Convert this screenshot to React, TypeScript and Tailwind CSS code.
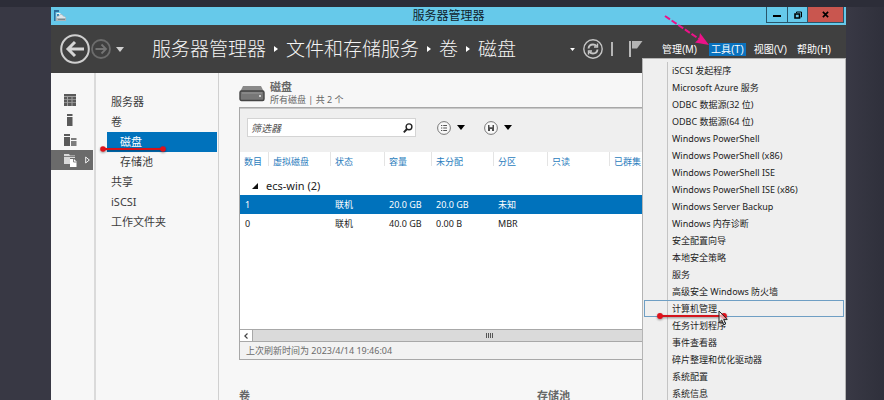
import type { ReactNode } from "react";

const crumbs = ["服务器管理器", "文件和存储服务", "卷", "磁盘"];

const toolItems = [
  "iSCSI 发起程序",
  "Microsoft Azure 服务",
  "ODBC 数据源(32 位)",
  "ODBC 数据源(64 位)",
  "Windows PowerShell",
  "Windows PowerShell (x86)",
  "Windows PowerShell ISE",
  "Windows PowerShell ISE (x86)",
  "Windows Server Backup",
  "Windows 内存诊断",
  "安全配置向导",
  "本地安全策略",
  "服务",
  "高级安全 Windows 防火墙",
  "计算机管理",
  "任务计划程序",
  "事件查看器",
  "碎片整理和优化驱动器",
  "系统配置",
  "系统信息",
];

const navItems = [
  { label: "服务器" },
  { label: "卷" },
  { label: "磁盘", child: true, active: true },
  { label: "存储池", child: true },
  { label: "共享" },
  { label: "iSCSI" },
  { label: "工作文件夹" },
];

const columns = ["数目", "虚拟磁盘", "状态", "容量", "未分配", "分区", "只读", "已群集"];

const disks = [
  { cells: ["1", "", "联机", "20.0 GB", "20.0 GB", "未知", "", ""], selected: true },
  { cells: ["0", "", "联机", "40.0 GB", "0.00 B", "MBR", "", ""], selected: false },
];

function Caret({ className }: { className: string }) {
  return (
    <svg viewBox="0 0 8 5" className={className} aria-hidden="true">
      <path d="M0 0h8L4 5z" fill="currentColor" />
    </svg>
  );
}

function TitleBar() {
  return (
    <div className="relative flex h-[18px] shrink-0 items-center justify-center bg-[#66c9ea]">
      <svg viewBox="0 0 12 12" className="absolute left-[3px] top-[3px] size-3" aria-hidden="true">
        <path d="M0 0h5v2H1.500v9H0z" fill="#2f6f9e" />
        <path d="M2.500 3h4v7h-4z" fill="#e8f1f5" />
        <path d="M3 4h2v2H3z" fill="#3f88b8" />
        <path d="M2 8c0-2 2-2 2.500-2C5 3.500 9 3.500 9.500 6 12 6.200 12 8 12 8v3H2z" fill="#a9b5ba" />
        <path d="M2.500 8c.3-1.500 2-1.500 2.500-1.500C5.500 4.300 8.500 4.300 9 6.500c1.500 0 2.500.5 2.500 1.500z" fill="#dde6ea" />
        <path d="M4 9h7v1H4z" fill="#7b888e" />
      </svg>
      <h1 className="text-[12px] leading-4 text-[#10242c]">服务器管理器</h1>
      <div className="absolute right-[2px] top-0 flex h-4 border border-t-0 border-[#28566b]">
        <button type="button" aria-label="最小化" className="flex w-[21px] items-center justify-center border-r border-[#28566b]">
          <span className="mt-0.5 h-0.5 w-2 bg-black" />
        </button>
        <button type="button" aria-label="还原" className="flex w-[20px] items-center justify-center border-r border-[#28566b]">
          <svg viewBox="0 0 8 8" className="size-2" aria-hidden="true">
            <path d="M2.500 2V1h5v5h-1" fill="none" stroke="#000" strokeWidth="1" />
            <path d="M1 3h4.500v4H1z" fill="none" stroke="#000" strokeWidth="1.600" />
          </svg>
        </button>
        <button type="button" aria-label="关闭" className="flex w-[35px] items-center justify-center bg-[#c9564f]">
          <svg viewBox="0 0 8 8" className="size-[7px]" aria-hidden="true">
            <path d="M1 1l6 6M7 1L1 7" stroke="#000" strokeWidth="1.900" />
          </svg>
        </button>
      </div>
    </div>
  );
}

function Header() {
  return (
    <header className="flex h-12 shrink-0 items-center bg-[#404040] pl-2 text-white">
      <button type="button" aria-label="后退">
        <svg viewBox="0 0 32 32" className="size-8" aria-hidden="true">
          <circle cx="16" cy="16" r="13.800" fill="none" stroke="#cfcfcf" strokeWidth="2" />
          <path d="M25 16H9M16 9l-7 7 7 7" fill="none" stroke="#d6d6d6" strokeWidth="3" />
        </svg>
      </button>
      <button type="button" aria-label="前进">
        <svg viewBox="0 0 20 20" className="size-5" aria-hidden="true">
          <circle cx="10" cy="10" r="9" fill="none" stroke="#6c6c6c" strokeWidth="1.800" />
          <path d="M4.500 10h10M10.500 5.500L15 10l-4.500 4.500" fill="none" stroke="#747474" strokeWidth="1.800" />
        </svg>
      </button>
      <button type="button" aria-label="历史记录" className="ml-[5px] text-[#d0d0d0]">
        <Caret className="h-[5px] w-2" />
      </button>
      <nav aria-label="路径" className="ml-7 flex items-center whitespace-nowrap text-[19px] font-light leading-7 text-[#f4f4f4]">
        {crumbs.map((c, i) => (
          <span key={c} className="flex items-center">
            {i > 0 && (
              <svg viewBox="0 0 4 6" className="mx-2 h-1.5 w-1" aria-hidden="true">
                <path d="M0 0v6l4-3z" fill="#fff" />
              </svg>
            )}
            <a href="#">{c}</a>
          </span>
        ))}
      </nav>
      <div className="ml-auto flex shrink-0 items-center">
        <button type="button" aria-label="展开路径" className="mr-2">
          <Caret className="h-[3px] w-[5px]" />
        </button>
        <button type="button" aria-label="刷新">
          <svg viewBox="0 0 20 20" className="size-5" fill="none" stroke="#c6c6c6" aria-hidden="true">
            <circle cx="10" cy="10" r="9.200" strokeWidth="1.400" />
            <path d="M5.500 9.500c.3-2.500 2.200-4 4.500-4 1.500 0 2.700.6 3.600 1.600M14.500 10.500c-.3 2.500-2.200 4-4.500 4-1.500 0-2.700-.6-3.600-1.600" strokeWidth="1.900" />
            <path d="M14.500 4.500v3.500H11M5.500 15.500V12H9" strokeWidth="1.400" />
          </svg>
        </button>
        <span className="ml-2 h-3.5 w-0.5 bg-[#b5b5b5]" />
        <button type="button" aria-label="通知" className="ml-4">
          <svg viewBox="0 0 14 18" className="h-[18px] w-3.5" aria-hidden="true">
            <path d="M1 1v16" stroke="#d8d8d8" strokeWidth="1.600" />
            <path d="M3 1h10.500L8 8.500H3z" fill="#b4b4b4" />
          </svg>
        </button>
        <div className="ml-[15px] mr-[15px] flex gap-2 whitespace-nowrap font-['Liberation_Sans','Noto_Sans_CJK_SC',sans-serif] text-[10px] leading-[13px]">
          <button type="button" className="px-1">管理(M)</button>
          <button type="button" className="bg-[#0a72be] px-0.5">工具(T)</button>
          <button type="button" className="pr-0.5">视图(V)</button>
          <button type="button">帮助(H)</button>
        </div>
      </div>
    </header>
  );
}

function RailButton({ label, children }: { label: string; children: ReactNode }) {
  return (
    <button type="button" aria-label={label} className="flex h-5 w-full items-center pl-3">
      <svg viewBox="0 0 14 14" className="size-3.5" fill="#5a5a5a" aria-hidden="true">
        {children}
      </svg>
    </button>
  );
}

function Rail() {
  return (
    <aside className="w-[43px] shrink-0 pr-px pt-[17px]">
      <RailButton label="仪表板">
        <path d="M1 1h12v12H1z" fill="#a2a2a2" />
        <path d="M1 1h12v2H1zM1 4h3v2.300H1zM5 4h3.500v2.300H5zM9.500 4H13v2.300H9.500zM1 7h3v2.300H1zM5 7h3.500v2.300H5zM9.500 7H13v2.300H9.500zM1 10h3v3H1zM5 10h3.500v3H5zM9.500 10H13v3H9.500z" />
      </RailButton>
      <RailButton label="本地服务器">
        <path d="M4 1h5.500v2H4zM4 4h5.500v9H4z" />
      </RailButton>
      <RailButton label="所有服务器">
        <path d="M1 1h6v2H1zM1 4h6v9H1z" />
        <path d="M8 5h5.500v2H8zM8 8h5.500v5H8z" fill="#7d7d7d" />
      </RailButton>
      <button type="button" aria-label="文件和存储服务" className="flex h-5 w-full items-center bg-[#6b6b6b] pl-3">
        <svg viewBox="0 0 14 14" className="size-3.5" aria-hidden="true">
          <path d="M1 1h5l1 1.500h5V5H7v6H1z" fill="#d9d9d9" />
          <path d="M1 3.500h11" stroke="#6b6b6b" strokeWidth=".8" />
          <path d="M7 6h4l2.500 2.500V14H7z" fill="#fff" />
          <path d="M10.500 6v3h3" fill="none" stroke="#6b6b6b" strokeWidth=".8" />
        </svg>
        <svg viewBox="0 0 5 8" className="ml-2 h-2 w-[5px]" aria-hidden="true">
          <path d="M.7 1v6L4.300 4z" fill="none" stroke="#fff" strokeWidth=".9" />
        </svg>
      </button>
    </aside>
  );
}

function SideNav() {
  return (
    <nav aria-label="文件和存储服务" className="w-[125px] shrink-0 border-l-2 border-r border-l-[#dadada] border-r-[#d0d0d0] pl-[11px] pr-px pt-[19px] text-[11px] text-[#3c3c3c]">
      {navItems.map((n) => (
        <a
          key={n.label}
          href="#"
          className={`relative flex h-5 items-center ${n.child ? "pl-[13px]" : "pl-1"} ${n.active ? "bg-[#0072bc] text-white" : ""}`}
        >
          {n.label}
          {n.active && (
            <svg viewBox="0 0 66 8" className="absolute -left-[7px] top-[13px] h-2 w-[66px] drop-shadow-[0_1px_1px_#00000066]" aria-hidden="true">
              <path d="M3 4h60" stroke="#d3141c" strokeWidth="2" />
              <circle cx="3" cy="4" r="2.800" fill="#e0121b" />
              <circle cx="63" cy="4" r="2.800" fill="#e0121b" />
            </svg>
          )}
        </a>
      ))}
    </nav>
  );
}

function DiskPanel() {
  return (
    <section className="border border-r-0 border-[#a8a8a8] bg-white">
      <div className="flex h-11 items-start border-t border-[#c8c8c8] bg-[#efefef] pl-[7px] pt-[9px]">
        <div className="flex h-[19px] w-[169px] items-center border border-[#d4d4d4] bg-white pl-[3px] pr-0.5">
          <input
            type="text"
            aria-label="筛选器"
            placeholder="筛选器"
            className="min-w-0 flex-1 bg-transparent text-[10px] italic leading-4 outline-none placeholder:text-[#555]"
          />
          <svg viewBox="0 0 10 10" className="size-2.5" fill="none" stroke="#222" aria-hidden="true">
            <circle cx="6" cy="3.800" r="2.900" strokeWidth="1.400" />
            <path d="M4 6L.8 9.300" strokeWidth="1.900" />
          </svg>
        </div>
        <div className="ml-[21px] flex h-[19px] items-center text-black">
          <button type="button" aria-label="查看">
            <svg viewBox="0 0 14 14" className="size-3.5" fill="none" stroke="#777" aria-hidden="true">
              <circle cx="7" cy="7" r="6.400" fill="#f8f8f8" strokeWidth="1" />
              <path d="M4 4.500h1.300M4 7h1.300M4 9.500h1.300M6.200 4.500H10M6.200 7H10M6.200 9.500H10" stroke="#555" strokeWidth="1.200" />
            </svg>
          </button>
          <button type="button" aria-label="查看选项" className="ml-1.5">
            <Caret className="h-[5px] w-2" />
          </button>
          <button type="button" aria-label="保存查询" className="ml-[19px]">
            <svg viewBox="0 0 14 14" className="size-3.5" fill="none" stroke="#777" aria-hidden="true">
              <circle cx="7" cy="7" r="6.400" fill="#f8f8f8" strokeWidth="1" />
              <path d="M4 4h6v6H4z" fill="#4c4c4c" stroke="none" />
              <path d="M5.500 4h3v2.200h-3zM6 8h2v2H6z" fill="#f4f4f4" stroke="none" />
            </svg>
          </button>
          <button type="button" aria-label="保存选项" className="ml-1.5">
            <Caret className="h-[5px] w-2" />
          </button>
        </div>
      </div>

      <div className="h-[177px] overflow-hidden">
        <table className="w-full table-fixed border-collapse whitespace-nowrap text-left text-[9px] text-[#222]">
          <colgroup>
            <col className="w-[28px]" />
            <col className="w-[62px]" />
            <col className="w-[54px]" />
            <col className="w-[47px]" />
            <col className="w-[62px]" />
            <col className="w-[54px]" />
            <col className="w-[62px]" />
            <col />
          </colgroup>
          <thead>
            <tr className="h-[21px] align-top text-[#2b7dbd]">
              {columns.map((c) => (
                <th key={c} className="p-0 font-normal">
                  <div className="h-3.5 pl-1 leading-5 [th:not(:first-child)>&]:border-l [th:not(:first-child)>&]:border-[#e4e4e4]">{c}</div>
                </th>
              ))}
            </tr>
          </thead>
          <tbody>
            <tr className="h-[22px]">
              <th colSpan={8} className="p-0 pl-3 pt-1 font-normal">
                <span className="flex items-center gap-2 text-[11px] leading-4">
                  <svg viewBox="0 0 6 6" className="size-1.5" aria-hidden="true">
                    <path d="M6 0v6H0z" fill="#111" />
                  </svg>
                  ecs-win (2)
                </span>
              </th>
            </tr>
            {disks.map((d) => (
              <tr key={d.cells[0]} className={`h-[19px] ${d.selected ? "bg-[#0072bc] text-white" : ""}`}>
                {d.cells.map((v, i) => (
                  <td key={columns[i]} className="p-0 pl-[5px]">{v}</td>
                ))}
              </tr>
            ))}
          </tbody>
        </table>
      </div>

      <div className="flex h-[13px] border-y border-[#a8a8a8] bg-[#dadada]">
        <button type="button" aria-label="向左滚动" className="flex w-[13px] items-center justify-center border-r border-[#a8a8a8] bg-white">
          <svg viewBox="0 0 4 6" className="h-1.5 w-1" aria-hidden="true">
            <path d="M3.500.5L.8 3l2.700 2.500" fill="none" stroke="#444" strokeWidth="1.200" />
          </svg>
        </button>
        <div className="flex flex-1 items-center pl-[233px]">
          <div className="flex h-[5px] gap-px">
            <span className="w-px bg-[#555]" />
            <span className="w-px bg-[#555]" />
            <span className="w-px bg-[#555]" />
            <span className="w-px bg-[#555]" />
          </div>
        </div>
      </div>
      <p className="h-[17px] bg-[#f2f2f2] pl-1.5 text-[9px] leading-[17px] text-[#6a6a6a]">上次刷新时间为 2023/4/14 19:46:04</p>
    </section>
  );
}

function ToolsMenu() {
  return (
    <div role="menu" aria-label="工具" className="absolute bottom-0 right-0 top-[51px] w-[204px] overflow-clip border border-b-0 border-[#b4b4b4] bg-[#efefef] pt-[3px]">
      <div className="ml-6 h-full border-l border-[#c4c4c4]">
        {toolItems.map((t) => {
          const hot = t === "计算机管理";
          return (
            <button
              key={t}
              type="button"
              role="menuitem"
              className="relative block h-[17px] w-full whitespace-nowrap pl-1 text-left text-[9px] leading-[17px] text-[#1c1c1c]"
            >
              {t}
              {hot && (
                <>
                  <span className="absolute -left-6 right-px top-0 h-[17px] border border-[#6f9fc4]" />
                  <svg viewBox="0 0 72 8" className="absolute -left-3 top-3 z-10 h-2 w-[72px] drop-shadow-[0_1px_1px_#00000066]" aria-hidden="true">
                    <path d="M4 4h64" stroke="#d3141c" strokeWidth="2.200" />
                    <circle cx="4" cy="4" r="2.900" fill="#e0121b" />
                    <circle cx="68" cy="4" r="2.900" fill="#e0121b" />
                  </svg>
                  <svg viewBox="0 0 10 16" className="absolute left-[50px] top-[10px] z-10 h-4 w-2.5" aria-hidden="true">
                    <path d="M1 1v11.500l2.700-2.500 2 4.800 2-.8-2-4.600h3.500z" fill="#ffffff99" stroke="#222" strokeWidth="1" />
                  </svg>
                </>
              )}
            </button>
          );
        })}
      </div>
    </div>
  );
}

export default function App() {
  return (
    <div
      lang="zh-CN"
      className="h-screen overflow-hidden border-t-[7px] border-[#2c2d38] bg-[#383844] bg-linear-to-l from-[#2f303b] from-0% to-[#383844] to-4% pl-[51px] pr-[38px] font-['Noto_Sans','Noto_Sans_CJK_SC',sans-serif]"
    >
      <div className="relative flex h-full flex-col bg-[#f7f7f7]">
        <TitleBar />
        <Header />
        <div className="flex min-h-0 flex-1">
          <Rail />
          <SideNav />
          <main className="min-w-0 flex-1 overflow-hidden pl-5 pt-[7px]">
            <div className="flex h-[27px] items-start gap-1.5">
              <svg viewBox="0 0 26 18" className="mt-1 h-[18px] w-[26px]" aria-hidden="true">
                <path d="M4 2h18l3 6H1z" fill="#8a8a8a" />
                <rect x="1" y="7" width="24" height="9.500" rx="1.500" fill="#777" stroke="#444" strokeWidth="1.400" />
                <path d="M3 9h20" stroke="#999" strokeWidth="1" />
                <circle cx="21" cy="12" r="1" fill="#eee" />
              </svg>
              <div className="-ml-px text-[#666]">
                <h2 className="text-[11px] font-bold leading-[13px]">磁盘</h2>
                <p className="text-[9px] leading-[13px]">所有磁盘 | 共 2 个</p>
              </div>
            </div>
            <DiskPanel />
            <div className="mt-7 grid grid-cols-[298px_1fr] text-[11px] font-bold leading-4 text-[#666]">
              <h2>卷</h2>
              <h2>存储池</h2>
            </div>
          </main>
        </div>
        <ToolsMenu />
        <svg viewBox="0 0 46 32" className="absolute right-[136px] top-2 h-8 w-[46px]" aria-hidden="true">
          <path d="M1 1l34 23" stroke="#ec1288" strokeWidth="2" strokeDasharray="6 2" />
          <path d="M45 30l-14-2.500 4-3.500 1-6z" fill="#ec1288" />
        </svg>
      </div>
    </div>
  );
}
